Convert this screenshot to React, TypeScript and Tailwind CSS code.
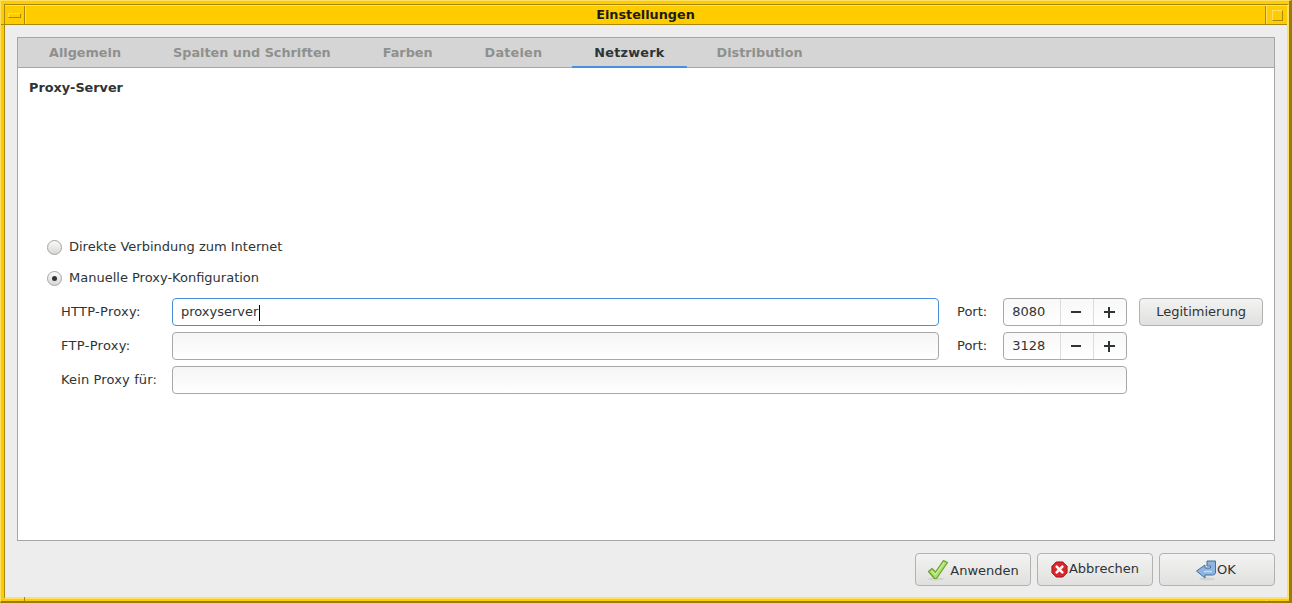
const font = { fontFamily: '"DejaVu Sans", sans-serif' };

function Radio({ checked, label }: { checked?: boolean; label: string }) {
  return (
    <div className="flex items-center h-[16px] pl-[29px] text-[13px] text-[#2e3436]">
      <span className="w-[15px] h-[15px] rounded-full border border-[#a4a4a2] bg-gradient-to-b from-[#fafafa] to-[#d8d8d6] flex items-center justify-center mr-[7px]">
        {checked && <span className="w-[5px] h-[5px] rounded-full bg-[#2e3436]" />}
      </span>
      <span>{label}</span>
    </div>
  );
}

function Spin({ value }: { value: string }) {
  return (
    <div className="w-[124px] h-[28px] ml-[16px] flex border border-[#a8a8a5] rounded-[4px] bg-gradient-to-b from-[#f8f8f8] to-[#ffffff] text-[13px] text-[#2e3436]">
      <span className="w-[56px] pl-[8px] leading-[26px]">{value}</span>
      <span className="w-[33px] border-l border-[#dcdcda] flex items-center justify-center">
        <span className="w-[10px] h-[2px] bg-[#2e3436] mr-[2px]" />
      </span>
      <span className="w-[33px] border-l border-[#dcdcda] flex items-center justify-center relative">
        <span className="w-[11px] h-[2px] bg-[#2e3436] mr-[2px]" />
        <span className="absolute left-[14px] w-[2px] h-[11px] bg-[#2e3436]" />
      </span>
    </div>
  );
}

function Field({ w, focus, children }: { w: string; focus?: boolean; children?: React.ReactNode }) {
  return (
    <div
      className={`${w} h-[28px] rounded-[4px] border bg-gradient-to-b ${
        focus ? "border-[#4a90d9] from-white to-white" : "border-[#a8a8a5] from-[#f5f5f5] to-white"
      } pl-[8px] text-[13px] leading-[26px] text-[#2e3436]`}
    >
      {children}
    </div>
  );
}

function Check() {
  return (
    <svg width="22" height="22" viewBox="0 0 22 22" className="shrink-0">
      <ellipse cx="9" cy="20" rx="8" ry="1.5" fill="#d2d2d0" />
      <path d="M1.5 12.5 L5 9.5 L8.5 13 L16.5 1.5 L20.5 3.5 L9.5 19.5 L7.5 19.5 Z" fill="#a9e06c" stroke="#6f9f30" strokeWidth="1.2" strokeLinejoin="round" />
      <path d="M4.5 12 L8.5 15.5 L17 4" fill="none" stroke="#d8f4b4" strokeWidth="1" />
    </svg>
  );
}

function Stop() {
  return (
    <svg width="17" height="17" viewBox="0 0 18 18" className="shrink-0">
      <path d="M5.5 1 H12.5 L17 5.5 V12.5 L12.5 17 H5.5 L1 12.5 V5.5 Z" fill="#d8262a" stroke="#9a1518" strokeWidth="1" />
      <path d="M6 6 L12 12 M12 6 L6 12" stroke="#fff" strokeWidth="2.8" strokeLinecap="round" />
    </svg>
  );
}

function Back() {
  return (
    <svg width="22" height="22" viewBox="0 0 22 22" className="shrink-0">
      <ellipse cx="12" cy="20" rx="8" ry="1.5" fill="#d2d2d0" />
      <path d="M12 2 H20.5 V13 C20.5 15 19.5 16 17.5 16 H10 V19 L1.5 12 L10 6 V9 H15.5 V7 H12 Z" fill="#8fb4e0" stroke="#41719f" strokeWidth="1" strokeLinejoin="round" />
      <path d="M9 12.5 H17" stroke="#c8dcf2" strokeWidth="1.5" />
    </svg>
  );
}

function Btn({ children }: { children: React.ReactNode }) {
  return (
    <div className="w-[116px] h-[33px] flex items-center justify-center rounded-[4px] border border-[#b2b2b0] bg-gradient-to-b from-[#f3f3f3] to-[#e0e0de] text-[13px] text-[#2e3436]">
      {children}
    </div>
  );
}

const notch = "absolute bg-[#a8890c]";

export default function App() {
  const tabs = [
    ["Allgemein", false, ""],
    ["Spalten und Schriften", false, ""],
    ["Farben", false, ""],
    ["Dateien", false, "tracking-[0.2px]"],
    ["Netzwerk", true, "tracking-[0.25px]"],
    ["Distribution", false, ""],
  ] as const;
  return (
    <div style={font} className="relative w-[1292px] h-[603px] overflow-hidden bg-[#ffcc00] border-t border-l border-r-[3px] border-b-2 border-t-[#ffe066] border-l-[#ffe066] border-r-[#9a7b0a] border-b-[#9a7b0a] pt-[3px] pl-[3px] pr-0 pb-[2px]">
      {/* frame notches */}
      <div className={`${notch} left-0 top-[23px] w-[4px] h-[1px]`} />
      <div className={`${notch} left-[23px] bottom-0 w-[1px] h-[4px]`} />
      <div className="absolute right-[-3px] top-[23px] w-[3px] h-[1px] bg-[#ffe066]" />
      <div className="absolute left-[1265px] bottom-[-2px] w-[1px] h-[3px] bg-[#ffe066]" />

      <div className="w-full h-full flex flex-col border-t border-l border-r-2 border-b-2 border-t-[#a8890c] border-l-[#a8890c] border-r-[#ffe066] border-b-[#ffe066]">
        {/* title */}
        <div className="h-[20px] flex shrink-0 bg-[#ffcc00] border-t border-t-[#ffe066] border-b border-b-[#a8890c]">
          <div className="w-[20px] shrink-0 border-r border-r-[#a8890c] flex items-center justify-center">
            <span className="w-[13px] h-[5px] border-t border-l border-t-[#ffe066] border-l-[#ffe066] border-r border-b border-r-[#a8890c] border-b-[#a8890c]" />
          </div>
          <div className="w-[1px] shrink-0 bg-[#ffe066]" />
          <div className="flex-1 text-center text-[12.8px] leading-[18px] font-bold text-[#1c1c1c]">Einstellungen</div>
          <div className="w-[1px] shrink-0 bg-[#a8890c]" />
          <div className="w-[21px] shrink-0 border-l border-l-[#ffe066] flex items-center justify-center">
            <span className="w-[11px] h-[11px] border-t border-l border-t-[#ffe066] border-l-[#ffe066] border-r border-b border-r-[#a8890c] border-b-[#a8890c]" />
          </div>
        </div>
        {/* body */}
        <div className="flex-1 bg-[#ededed] px-[12px] pt-[12px] flex flex-col min-h-0">
          <div className="h-[504px] shrink-0 border border-[#a6a6a6] bg-white flex flex-col">
            <div className="h-[30px] shrink-0 bg-[#d5d5d5] border-b border-[#a6a6a6] flex pl-[9px] gap-[8px] text-[12.8px] font-bold">
              {tabs.map(([t, active, track]) => (
                <div
                  key={t}
                  className={`px-[22px] h-[30px] leading-[29px] ${track} ${
                    active ? "text-[#2e3436] border-b-2 border-[#4a90d9]" : "text-[#8f908e]"
                  }`}
                >
                  {t}
                </div>
              ))}
            </div>
            <div className="flex-1 flex flex-col">
              <div className="pl-[11px] pt-[12px] text-[12.8px] font-bold text-[#2e3436] leading-[16px] h-[171px] shrink-0">Proxy-Server</div>
              <Radio label="Direkte Verbindung zum Internet" />
              <div className="h-[15px] shrink-0" />
              <Radio checked label="Manuelle Proxy-Konfiguration" />
              <div className="h-[12px] shrink-0" />
              <div className="flex flex-col gap-[6px] text-[13px] text-[#2e3436]">
                <div className="flex items-center">
                  <span className="w-[154px] pl-[43px] shrink-0 tracking-[0.27px]">HTTP-Proxy:</span>
                  <Field w="w-[767px]" focus>
                    proxyserver<span className="inline-block w-[1px] h-[16px] ml-[1px] bg-black align-middle" />
                  </Field>
                  <span className="ml-[18px]">Port:</span>
                  <Spin value="8080" />
                  <div className="ml-[12px] w-[124px] h-[28px] rounded-[4px] border border-[#b2b2b0] bg-gradient-to-b from-[#f3f3f3] to-[#e0e0de] text-center leading-[25px]">Legitimierung</div>
                </div>
                <div className="flex items-center">
                  <span className="w-[154px] pl-[43px] shrink-0 tracking-[0.3px]">FTP-Proxy:</span>
                  <Field w="w-[767px]" />
                  <span className="ml-[18px]">Port:</span>
                  <Spin value="3128" />
                </div>
                <div className="flex items-center">
                  <span className="w-[154px] pl-[43px] shrink-0 tracking-[0.14px]">Kein Proxy für:</span>
                  <Field w="w-[955px]" />
                </div>
              </div>
            </div>
          </div>
          <div className="flex justify-end gap-[6px] mt-[12px]">
            <Btn><Check /><span className="ml-[1px] mt-[2px]">Anwenden</span></Btn>
            <Btn><Stop /><span className="ml-[1px] mt-[-2px]">Abbrechen</span></Btn>
            <Btn><span className="flex items-center mr-[3px]"><Back /><span className="mt-[1px]">OK</span></span></Btn>
          </div>
        </div>
      </div>
    </div>
  );
}
